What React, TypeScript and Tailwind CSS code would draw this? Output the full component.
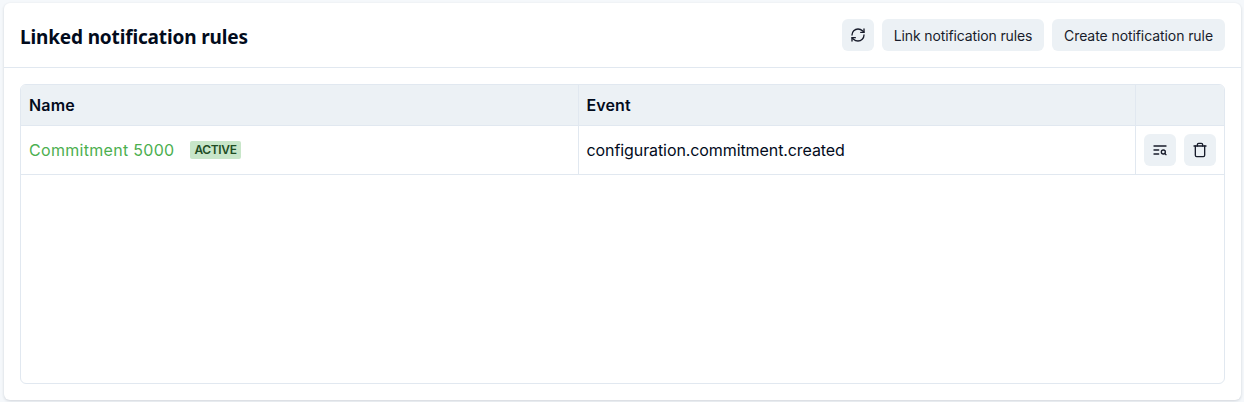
import type { ReactNode } from "react";
import { RefreshCw, Trash } from "lucide-react";

function TextSearchIcon() {
  return (
    <svg width="16" height="16" viewBox="0 0 24 24" fill="none" stroke="currentColor" strokeWidth="2" strokeLinecap="round" strokeLinejoin="round">
      <path d="M21 6H3" />
      <path d="M10 12H3" />
      <path d="M10 18H3" />
      <circle cx="17" cy="15" r="3" />
      <path d="m21 19-1.9-1.9" />
    </svg>
  );
}

function IconButton({ label, children }: { label: string; children: ReactNode }) {
  return (
    <button aria-label={label} className="flex size-8 shrink-0 items-center justify-center rounded-md bg-[#ecf1f5] text-[#181c2b]">
      {children}
    </button>
  );
}

export default function App() {
  return (
    <div className="h-[402px] overflow-hidden bg-[#f5f8fb] pt-[3px] pr-[3px] pl-1 font-['Inter',sans-serif] text-[#020b1c]">
      <section className="flex h-[397px] flex-col rounded-md bg-white shadow-[0_1px_3px_rgba(15,23,42,0.16)]">
        <header className="flex h-[65px] shrink-0 items-center justify-between border-b border-[#e1e8f0] px-4">
          <h2 className="pt-1 font-['Noto_Sans',sans-serif] text-[19px] font-bold tracking-[-0.15px] whitespace-nowrap">
            Linked notification rules
          </h2>
          <div className="flex gap-2 text-[14px] text-[#181c2b]">
            <IconButton label="Refresh">
              <RefreshCw size={16} />
            </IconButton>
            <button className="h-8 w-[162px] rounded-md bg-[#ecf1f5] whitespace-nowrap tracking-[-0.13px]">Link notification rules</button>
            <button className="h-8 w-[173px] rounded-md bg-[#ecf1f5] whitespace-nowrap tracking-[-0.08px]">Create notification rule</button>
          </div>
        </header>
        <div className="p-4">
          <div className="h-[300px] overflow-hidden rounded-md border border-[#e1e8f0] text-[16px]">
            <div className="grid h-[41px] grid-cols-[558px_557px_1fr] border-b border-[#e1e8f0] bg-[#ecf1f5] font-semibold">
              <div className="flex items-center border-r border-[#e1e8f0] px-2 tracking-[0.15px]">Name</div>
              <div className="flex items-center border-r border-[#e1e8f0] px-[7.5px] tracking-[0.1px]">Event</div>
              <div />
            </div>
            <div className="grid h-[49px] grid-cols-[558px_557px_1fr] border-b border-[#e1e8f0]">
              <div className="flex items-center gap-4 border-r border-[#e1e8f0] px-2">
                <a className="w-[145px] tracking-[0.3px] whitespace-nowrap text-[#4caf50]">Commitment 5000</a>
                <span className="flex h-[18px] w-[51px] items-center justify-center rounded-xs bg-[#c8e6c9] text-[12px] font-semibold tracking-[-0.35px] text-[#1f4d24]">
                  ACTIVE
                </span>
              </div>
              <div className="flex items-center border-r border-[#e1e8f0] px-[7.5px] tracking-[-0.09px]">configuration.commitment.created</div>
              <div className="flex items-center gap-2 px-2">
                <IconButton label="View rule">
                  <TextSearchIcon />
                </IconButton>
                <IconButton label="Delete rule">
                  <Trash size={16} />
                </IconButton>
              </div>
            </div>
          </div>
        </div>
      </section>
    </div>
  );
}
